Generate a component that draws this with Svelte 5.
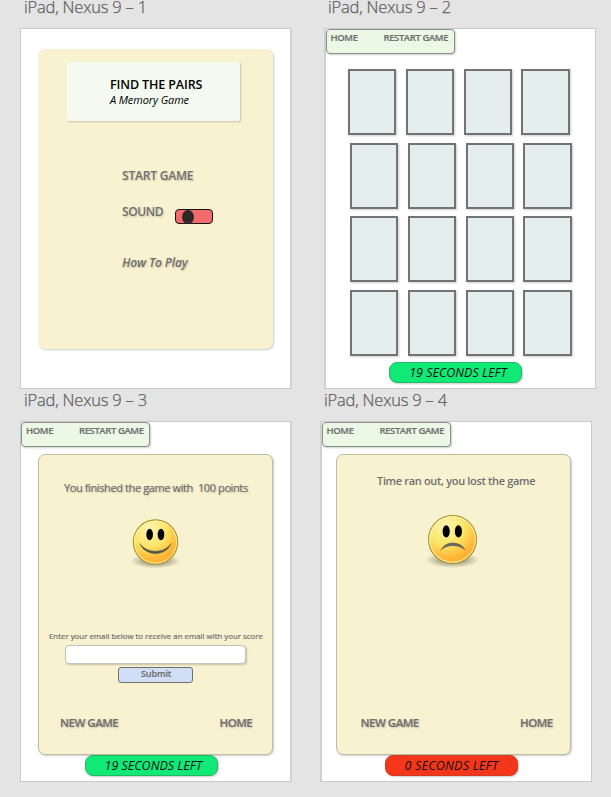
<script>
  const rows = [0, 1, 2, 3];
  const cols = [0, 1, 2, 3];
</script>

{#snippet nav()}
  <nav><b class="t home">HOME</b><b class="t restart">RESTART GAME</b></nav>
{/snippet}

{#snippet actions()}
  <div class="actions"><b class="t new">NEW GAME</b><b class="t back">HOME</b></div>
{/snippet}

{#snippet face(happy)}
  <svg class:happy class="face" viewBox="0 0 54 54">
    <defs>
      <radialGradient id={happy ? 'skin-h' : 'skin-s'} cx="0.36" cy="0.22" r="0.78">
        <stop offset="0" stop-color="#fbf5b4" />
        <stop offset="0.5" stop-color="#fae566" />
        <stop offset="0.85" stop-color="#ffb737" />
        <stop offset="1" stop-color="#ffb02e" />
      </radialGradient>
      <radialGradient id={happy ? 'shade-h' : 'shade-s'}>
        <stop offset="0.3" stop-color="#5e5942" stop-opacity="0.6" />
        <stop offset="1" stop-color="#5e5942" stop-opacity="0" />
      </radialGradient>
    </defs>
    <ellipse cx="27" cy="46" rx="26.5" ry="8" fill="url(#{happy ? 'shade-h' : 'shade-s'})" />
    <circle cx="27" cy="26" r="23.5" fill="url(#{happy ? 'skin-h' : 'skin-s'})" stroke="#a39321" stroke-width="1.1" />
    <circle cx="27" cy="26" r="22.3" fill="none" stroke="#fff6c4" stroke-opacity="0.85" stroke-width="1" />
    <ellipse cx="20.8" cy="18" rx="3.5" ry="6" />
    <ellipse cx="32.8" cy="18" rx="3.5" ry="6" />
    {#if happy}
      <path d="M10.3 27.5Q13 34 19 36.5Q27 40 35 36.5Q41 34 43.7 27.5Q40.5 32 35 34.3Q27 37 19 34.3Q13.5 32 10.3 27.5Z" fill="#55554f" stroke="#55554f" stroke-width="0.4" />
    {:else}
      <path d="M15.3 36.8Q19 29.3 27.5 29.3Q35.5 29.3 39.5 36.3Q34 32.2 27.5 32.2Q20 32.2 15.3 36.8Z" fill="#66655c" stroke="#66655c" stroke-width="0.3" />
    {/if}
  </svg>
{/snippet}

<main>
  <div class="row">
    <section>
      <h2>iPad, Nexus 9 – 1</h2>
      <div class="board">
        <div class="panel menu">
          <header>
            <b class="t title">FIND THE PAIRS</b>
            <em class="t sub">A Memory Game</em>
          </header>
          <b class="t start">START GAME</b>
          <div class="sound"><b class="t snd">SOUND</b><span class="toggle"><i></i></span></div>
          <em class="t how">How To Play</em>
        </div>
      </div>
    </section>
    <section class="second">
      <h2>iPad, Nexus 9 – 2</h2>
      <div class="board wide-left">
        {@render nav()}
        <div class="cards">
          {#each rows as r}
            <div class="cardrow">{#each cols as c}<span class="card"></span>{/each}</div>
          {/each}
        </div>
        <div class="timer play"><em class="t time">19 SECONDS LEFT</em></div>
      </div>
    </section>
  </div>
  <div class="row lower">
    <section>
      <h2>iPad, Nexus 9 – 3</h2>
      <div class="board">
        {@render nav()}
        <div class="panel result">
          <p class="t won">You finished the game with&nbsp; 100 points</p>
          {@render face(true)}
          <p class="t ask">Enter your email below to receive an email with your score</p>
          <div class="input"></div>
          <div class="submit"><b class="t">Submit</b></div>
          {@render actions()}
        </div>
        <div class="timer"><em class="t time">19 SECONDS LEFT</em></div>
      </div>
    </section>
    <section class="second">
      <h2>iPad, Nexus 9 – 4</h2>
      <div class="board wide-left">
        {@render nav()}
        <div class="panel result lost">
          <p class="t over">Time ran out, you lost the game</p>
          {@render face(false)}
          {@render actions()}
        </div>
        <div class="timer out"><em class="t time">0 SECONDS LEFT</em></div>
      </div>
    </section>
  </div>
</main>

<style>
  main {
    width: 611px; height: 797px; overflow: hidden; background: #e4e4e4;
    font-family: "Open Sans", "Noto Sans", sans-serif; color: #707070;
  }
  main * { box-sizing: border-box; }
  .row { display: flex; padding-left: 20px; height: 389px; }
  .lower { height: 408px; }
  section { width: 272px; display: flex; flex-direction: column; }
  .second { margin-left: 32px; }
  .lower .second { margin-left: 28px; }
  h2 {
    margin: 0; height: 28px; padding-left: 4px; flex: none;
    font-size: 16.5px; font-weight: 300; line-height: 16px; letter-spacing: -0.2px;
    -webkit-text-stroke: 0.25px #606060;
    white-space: nowrap; color: #606060;
    display: flex; align-items: flex-end; padding-bottom: 13px;
  }
  .lower h2 { height: 32px; }
  .board {
    width: 272px; height: 361px; background: #fff; display: flex; flex-direction: column;
    border: 1px solid #c9c9c9; border-right: 2px solid #d2d2d2;
  }
  .wide-left { border-left: 2px solid #d0d0d0; border-right: 1px solid #c9c9c9; }
  .t { display: block; margin: 0; line-height: 16px; white-space: nowrap; font-weight: 600; width: max-content; }
  .panel {
    background: #f8f2d0; border-radius: 7px; display: flex; flex-direction: column;
    box-shadow: 1px 1px 2px #0003;
  }
  .menu { margin: 20px 0 0 17px; width: 235px; height: 300px; }
  header {
    margin: 13px 0 0 29px; width: 173px; height: 59px; padding: 15px 0 0 43px;
    background: #f4faf0; border-radius: 2px; box-shadow: 1px 1px 2px #0003; color: #000;
  }
  .title { font-size: 12.5px; letter-spacing: -0.12px; }
  .sub { font-size: 11px; font-weight: 400; letter-spacing: -0.12px; line-height: 14px; }
  .start, .snd, .how, .new, .back, .won { text-shadow: 1px 1px 2px #0003; }
  .start { font-size: 12px; letter-spacing: -0.2px; }
  .snd { font-size: 12px; letter-spacing: -0.4px; }
  .start { margin: 47px 0 0 84px; }
  .sound { display: flex; margin: 20px 0 0 84px; height: 21px; }
  .snd { width: 52.5px; }
  .toggle {
    width: 38px; height: 15px; margin-top: 5px; border: 1.5px solid #151515; border-radius: 4px;
    background: #f16b6c; padding-left: 6px; display: flex; align-items: center;
  }
  .toggle i { width: 12px; height: 14px; border-radius: 50%; background: #2d2727; flex: none; }
  .how { font-size: 12px; margin: 30px 0 0 84px; letter-spacing: -0.1px; }
  nav {
    width: 129px; height: 25px; flex: none; display: flex; padding: 0 0 0 4px;
    background: #ebf8e6; border: 1px solid #8c8f8a; border-radius: 4px;
    box-shadow: 1px 1px 2px #0003;
  }
  .wide-left nav { padding-left: 3.5px; }
  nav .t { font-size: 9.5px; letter-spacing: -0.4px; -webkit-text-stroke: 0.2px #707070; }
  .home { width: 53px; }
  .cards { display: flex; flex-direction: column; gap: 7.6px; margin: 15px 0 0 24px; }
  .cardrow { display: flex; gap: 9.6px; }
  .cardrow:first-child { margin-left: -2px; }
  .card {
    width: 48.2px; height: 66px; background: #e4eeec; border: 2px solid #737373;
    box-shadow: 1px 1px 2px #0003;
  }
  .timer {
    width: 133px; height: 21px; margin-left: 64px; background: #10e975; border-radius: 8px;
    border: 1px solid #20ba65; box-shadow: 1px 1px 2px #0003; padding-left: 18.5px; flex: none;
  }
  .time { color: #111; font-size: 12.5px; font-weight: 400; line-height: 19px; }
  .play { margin: 6px 0 0 63px; }
  .play .time { padding-left: 0.7px; line-height: 20px; }
  .out { background: #f4361b; border-color: #cf3b25; margin-left: 63px; }
  .out .time { letter-spacing: 0.22px; }
  .result {
    width: 235px; height: 301px; flex: none; margin: 7px 0 0 17px; border: 1px solid #bfbba6;
  }
  .lost { width: 235px; margin-left: 14px; }
  .won { font-size: 11px; font-weight: 500; margin: 25px 0 0 25px; letter-spacing: -0.39px; -webkit-text-stroke: 0.2px #707070; }
  .face { width: 55px; height: 55px; margin: 24px 0 0 88px; flex: none; }
  .happy { width: 51px; height: 52px; margin: 21px 0 0 91px; }
  .ask { font-size: 7.8px; font-weight: 500; margin: 59px 0 0 10px; letter-spacing: 0.03px; -webkit-text-stroke: 0.2px #707070; }
  .input {
    width: 181px; height: 19px; margin: 1px 0 0 26px; background: #fff; border: 1px solid #c5c3b8;
    border-radius: 4px; box-shadow: 1px 1px 2px #0003; flex: none;
  }
  .submit {
    width: 75px; height: 16px; margin: 3px 0 0 79px; background: #d0dff6; border: 1px solid #707070;
    border-radius: 3px; padding-left: 22px; flex: none;
  }
  .submit .t { font-size: 9px; line-height: 12px; letter-spacing: -0.1px; -webkit-text-stroke: 0.2px #707070; }
  .actions { display: flex; margin: auto 0 23px 21px; }
  .actions .t { font-size: 11.5px; letter-spacing: -0.5px; -webkit-text-stroke: 0.2px #707070; }
  .new { width: 159.5px; }
  .over { font-size: 11px; margin: 18px 0 0 40px; letter-spacing: -0.33px; }
  .lost .actions { margin-left: 23.5px; }
</style>
